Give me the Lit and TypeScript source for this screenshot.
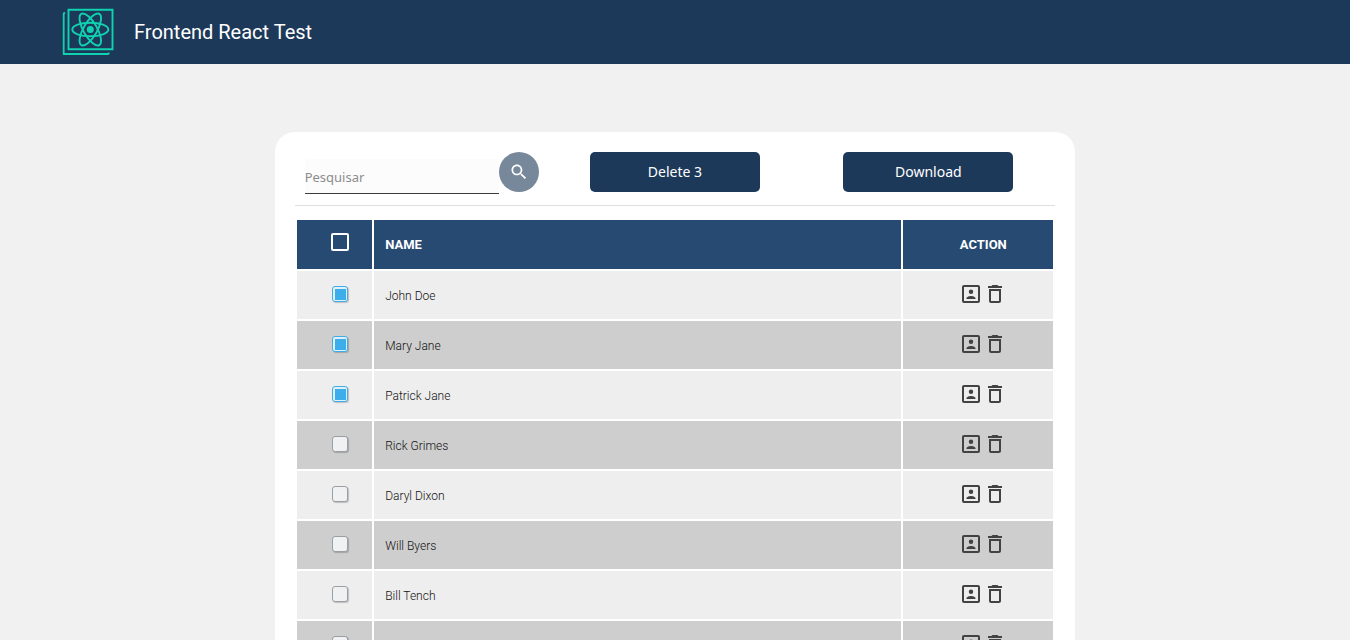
import { LitElement, html, css, svg } from "lit";
import { customElement, state, property } from "lit/decorators.js";

interface Person {
  id: number;
  name: string;
  selected: boolean;
}

const NAMES = [
  "John Doe",
  "Mary Jane",
  "Patrick Jane",
  "Rick Grimes",
  "Daryl Dixon",
  "Will Byers",
  "Bill Tench",
  "Holden Ford",
];

const searchPath = svg`<path d="M15.5 14h-.79l-.28-.27C15.41 12.59 16 11.11 16 9.5 16 5.91 13.09 3 9.5 3S3 5.91 3 9.5 5.91 16 9.5 16c1.61 0 3.09-.59 4.23-1.57l.27.28v.79l5 4.99L20.49 19l-4.99-5zm-6 0C7.01 14 5 11.99 5 9.5S7.01 5 9.5 5 14 7.01 14 9.5 11.99 14 9.5 14z"/>`;
const profilePath = svg`<path d="M19 3H5a2 2 0 0 0-2 2v14a2 2 0 0 0 2 2h14a2 2 0 0 0 2-2V5a2 2 0 0 0-2-2zm0 16H5V5h14v14zm-7-7a2.250 2.250 0 1 0 0-4.500 2.250 2.250 0 0 0 0 4.500zM16.500 16.250c0-1.500-3-2.250-4.500-2.250s-4.500.75-4.500 2.250V17h9v-.75z"/>`;
const trashPath = svg`<path d="M6 19c0 1.100.9 2 2 2h8c1.100 0 2-.9 2-2V7H6v12zM8 9h8v10H8V9zm7.500-5-1-1h-5l-1 1H5v2h14V4h-3.500z"/>`;

@customElement("app-icon")
class AppIcon extends LitElement {
  @property() name = "";
  static styles = css`
    :host { display: block; }
    .icon { display: block; width: 100%; fill: currentColor; }
  `;
  render() {
    const shape =
      this.name === "search" ? searchPath : this.name === "profile" ? profilePath : trashPath;
    return html`<svg class="icon" viewBox="0 0 24 24" aria-hidden="true">${shape}</svg>`;
  }
}

@customElement("app-header")
class AppHeader extends LitElement {
  static styles = css`
    :host { display: block; }
    .bar {
      display: flex;
      align-items: center;
      gap: 20px;
      height: 64px;
      padding: 0 60px;
      background: #1d3959;
      color: #fff;
    }
    .logo { display: block; width: 54px; height: 64px; }
    .title { margin: 0; font: 400 20px/24px Roboto, sans-serif; }
  `;
  render() {
    return html`
      <header class="bar">
        <svg class="logo" viewBox="0 0 54 64" fill="none" stroke="#0fd3b0" aria-hidden="true">
          <path d="M8.500 9.700h44v39.500h-44z" stroke-width="1.900" />
          <path d="M5 12.500L3.700 13.500V54H48L49.500 53" stroke-width="1.800" />
          <g transform="translate(30.300 29.500)" stroke-width="1.900">
            <ellipse rx="18" ry="6.800" />
            <ellipse rx="18" ry="6.800" transform="rotate(60)" />
            <ellipse rx="18" ry="6.800" transform="rotate(120)" />
            <circle r="3.500" fill="#0fd3b0" stroke="none" />
          </g>
        </svg>
        <h1 class="title">Frontend React Test</h1>
      </header>
    `;
  }
}

@customElement("app-root")
class AppRoot extends LitElement {
  @state() private people: Person[] = NAMES.map((name, i) => ({
    id: i + 1,
    name,
    selected: i < 3,
  }));
  @state() private query = "";

  static styles = css`
    :host {
      display: block;
      min-height: 100vh;
      background: #f1f1f1;
      font-family: "Noto Sans", sans-serif;
    }
    .card {
      box-sizing: border-box;
      max-width: 800px;
      margin: 68px auto 0;
      padding: 20px;
      border-radius: 20px;
      background: #fff;
    }
    .toolbar {
      display: grid;
      grid-template-columns: repeat(3, 1fr);
      justify-items: center;
      padding-bottom: 11px;
      border-bottom: 1px solid #dedede;
      margin-bottom: 12px;
    }
    .search { display: flex; align-items: flex-start; }
    .query {
      box-sizing: border-box;
      width: 194px;
      height: 35px;
      margin: 7px 0 0;
      padding: 2px 0 0;
      border: 0;
      border-bottom: 1px solid #3c3c3c;
      border-radius: 0;
      outline: 0;
      background: #fcfcfc;
      font: 13px/18px "Noto Sans", sans-serif;
      color: #333;
    }
    .query::placeholder { color: #8c8c8c; opacity: 1; }
    .go {
      display: grid;
      place-items: center;
      width: 40px;
      height: 40px;
      padding: 0;
      border: 0;
      border-radius: 50%;
      background: #77889b;
      color: #fff;
    }
    .go app-icon { width: 20px; }
    .main-button {
      width: 170px;
      height: 40px;
      padding: 0;
      border: 0;
      border-radius: 5px;
      background: #1d3959;
      color: #fff;
      font: 14px/20px "Noto Sans", sans-serif;
    }
    .people {
      width: 100%;
      table-layout: fixed;
      border-collapse: separate;
      border-spacing: 2px;
      font: 300 12px/16px Roboto, sans-serif;
      color: #111;
    }
    .check { width: 10%; }
    .action { width: 20%; }
    th, td { box-sizing: border-box; height: 48px; padding: 2px 0 0 11px; text-align: left; }
    th {
      height: 49px;
      padding-top: 0;
      background: #274a73;
      color: #fff;
      font: 700 13px/16px Roboto, sans-serif;
    }
    tr > .check, tr > .action { text-align: center; }
    th.check { padding-bottom: 5px; }
    td.check, td.action { padding-top: 0; padding-bottom: 2px; }
    .row { background: #eee; }
    .row:nth-child(even) { background: #cecece; }
    .box {
      appearance: none;
      display: block;
      box-sizing: border-box;
      width: 16px;
      height: 16px;
      margin: 0 auto;
      border: 1px solid #9b9fa3;
      border-radius: 3px;
      background: #eff1f3;
      box-shadow: 1px 1px 1px rgba(0, 0, 0, 0.2);
    }
    .box:checked {
      border-color: #3daee9;
      background: linear-gradient(#3daee9, #3daee9) center / 11px 11px no-repeat border-box #e4f0f7;
    }
    .all {
      appearance: none;
      display: block;
      box-sizing: border-box;
      width: 18px;
      height: 18px;
      margin: 0 auto;
      border: 2px solid #fff;
      border-radius: 2px;
    }
    .all:checked { background: #fff; }
    .tools { display: flex; justify-content: center; }
    .tool {
      width: 24px;
      height: 24px;
      padding: 0;
      border: 0;
      background: none;
      color: #424242;
    }
    button { cursor: pointer; }
  `;

  private toggle(id: number) {
    this.people = this.people.map((p) => (p.id === id ? { ...p, selected: !p.selected } : p));
  }

  private toggleAll(e: Event) {
    const selected = (e.target as HTMLInputElement).checked;
    this.people = this.people.map((p) => ({ ...p, selected }));
  }

  private remove(id: number) {
    this.people = this.people.filter((p) => p.id !== id);
  }

  private removeSelected() {
    this.people = this.people.filter((p) => !p.selected);
  }

  render() {
    const count = this.people.filter((p) => p.selected).length;
    const shown = this.people.filter((p) =>
      p.name.toLowerCase().includes(this.query.toLowerCase())
    );
    return html`
      <app-header></app-header>
      <main class="card">
        <div class="toolbar">
          <form class="search" @submit=${(e: Event) => e.preventDefault()}>
            <input
              class="query"
              type="text"
              placeholder="Pesquisar"
              aria-label="Pesquisar"
              @input=${(e: Event) => (this.query = (e.target as HTMLInputElement).value)}
            />
            <button class="go" aria-label="Pesquisar"><app-icon name="search"></app-icon></button>
          </form>
          <button class="main-button" @click=${this.removeSelected}>Delete ${count}</button>
          <button class="main-button">Download</button>
        </div>
        <table class="people">
          <thead>
            <tr>
              <th class="check">
                <input class="all" type="checkbox" aria-label="Select all" @change=${this.toggleAll} />
              </th>
              <th>NAME</th>
              <th class="action">ACTION</th>
            </tr>
          </thead>
          <tbody>
            ${shown.map(
              (p) => html`
                <tr class="row">
                  <td class="check">
                    <input
                      class="box"
                      type="checkbox"
                      aria-label=${p.name}
                      .checked=${p.selected}
                      @change=${() => this.toggle(p.id)}
                    />
                  </td>
                  <td>${p.name}</td>
                  <td class="action">
                    <div class="tools">
                      <button class="tool" aria-label="View ${p.name}">
                        <app-icon name="profile"></app-icon>
                      </button>
                      <button
                        class="tool"
                        aria-label="Delete ${p.name}"
                        @click=${() => this.remove(p.id)}
                      >
                        <app-icon name="trash"></app-icon>
                      </button>
                    </div>
                  </td>
                </tr>
              `
            )}
          </tbody>
        </table>
      </main>
    `;
  }
}
